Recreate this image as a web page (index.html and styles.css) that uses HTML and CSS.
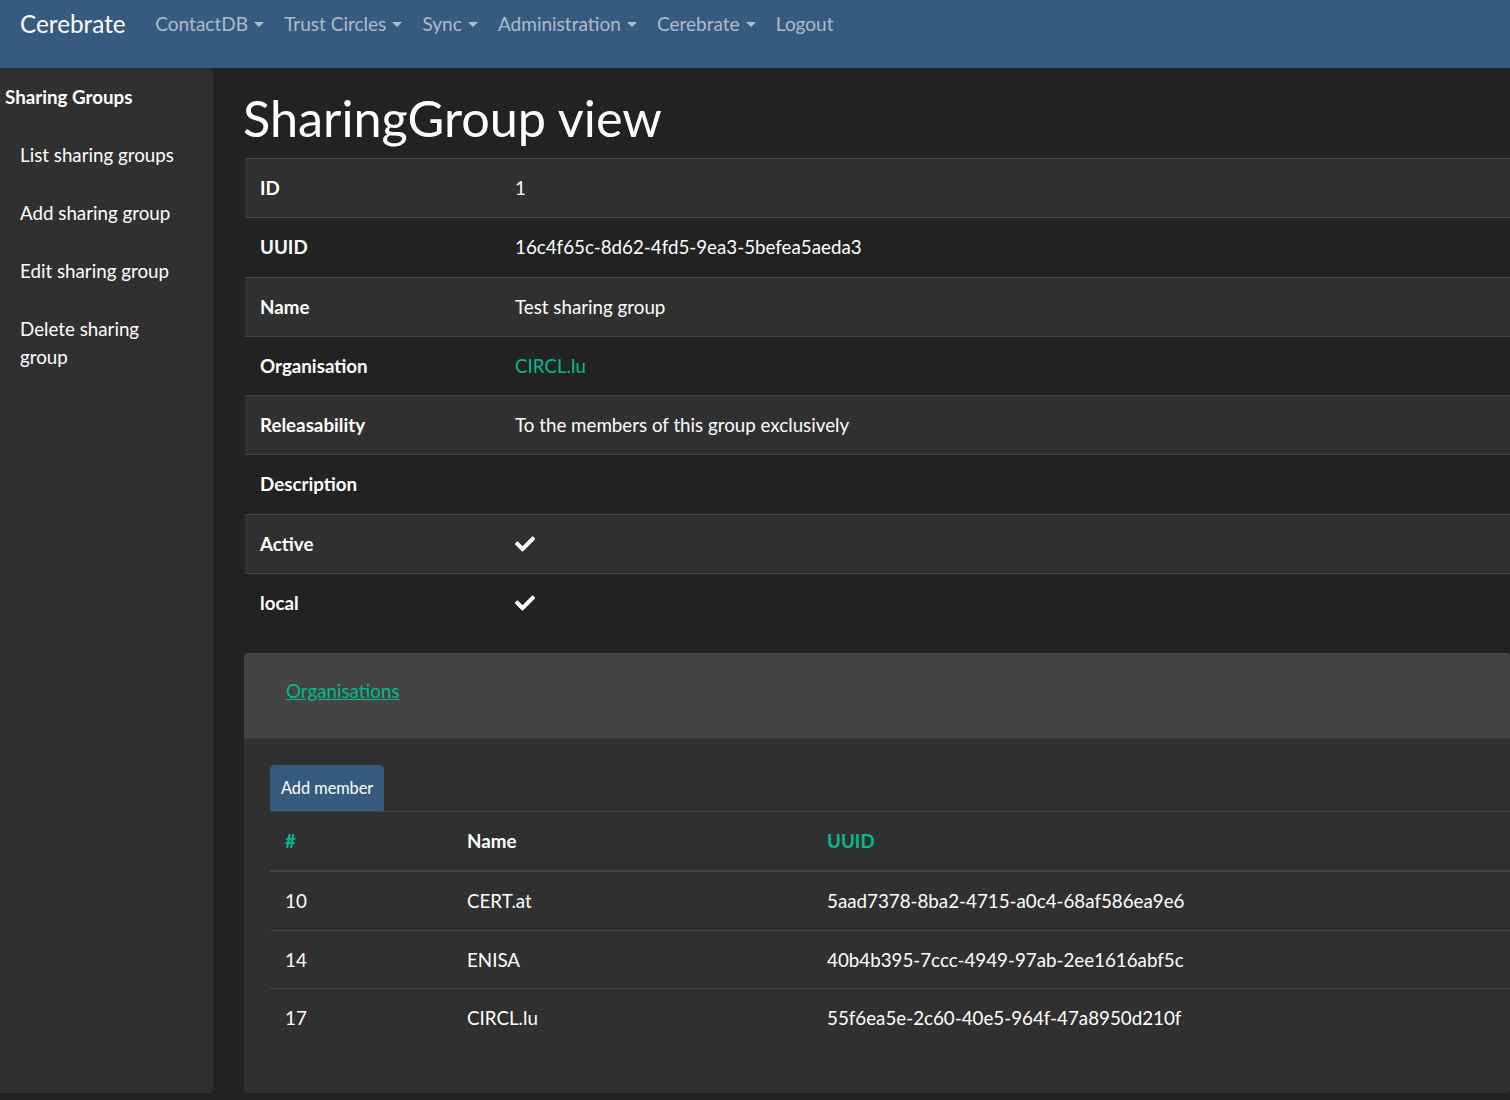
FILE: index.html
```html
<!DOCTYPE html>
<html>
<head>
<meta charset="utf-8">
<link rel="stylesheet" href="styles.css">
</head>
<body>
<nav class="navbar">
  <span class="brand">Cerebrate</span>
  <ul class="nav">
    <li class="nav-link dd">ContactDB</li>
    <li class="nav-link dd">Trust Circles</li>
    <li class="nav-link dd">Sync</li>
    <li class="nav-link dd">Administration</li>
    <li class="nav-link dd">Cerebrate</li>
    <li class="nav-link">Logout</li>
  </ul>
</nav>
<div class="layout">
  <aside class="sidebar">
    <div class="side-head">Sharing Groups</div>
    <a class="side-item">List sharing groups</a>
    <a class="side-item">Add sharing group</a>
    <a class="side-item">Edit sharing group</a>
    <a class="side-item">Delete sharing group</a>
  </aside>
  <main class="main">
    <h1 class="title">SharingGroup view</h1>
    <div class="details">
      <div class="drow striped"><div class="dlabel">ID</div><div class="dval">1</div></div>
      <div class="drow"><div class="dlabel">UUID</div><div class="dval">16c4f65c-8d62-4fd5-9ea3-5befea5aeda3</div></div>
      <div class="drow striped"><div class="dlabel">Name</div><div class="dval">Test sharing group</div></div>
      <div class="drow"><div class="dlabel">Organisation</div><div class="dval"><a class="link">CIRCL.lu</a></div></div>
      <div class="drow striped"><div class="dlabel">Releasability</div><div class="dval">To the members of this group exclusively</div></div>
      <div class="drow"><div class="dlabel">Description</div><div class="dval"></div></div>
      <div class="drow striped"><div class="dlabel">Active</div><div class="dval"><svg class="check" viewBox="0 0 512 512"><path d="M173.898 439.404l-166.4-166.4c-9.997-9.997-9.997-26.206 0-36.204l36.203-36.204c9.997-9.998 26.207-9.998 36.204 0L192 312.69 432.095 72.596c9.997-9.997 26.207-9.997 36.204 0l36.203 36.204c9.997 9.997 9.997 26.206 0 36.204l-294.4 294.401c-9.998 9.997-26.207 9.997-36.204-.001z"/></svg></div></div>
      <div class="drow"><div class="dlabel">local</div><div class="dval"><svg class="check" viewBox="0 0 512 512"><path d="M173.898 439.404l-166.4-166.4c-9.997-9.997-9.997-26.206 0-36.204l36.203-36.204c9.997-9.998 26.207-9.998 36.204 0L192 312.69 432.095 72.596c9.997-9.997 26.207-9.997 36.204 0l36.203 36.204c9.997 9.997 9.997 26.206 0 36.204l-294.4 294.401c-9.998 9.997-26.207 9.997-36.204-.001z"/></svg></div></div>
    </div>
    <section class="card">
      <div class="card-header"><a class="link underline">Organisations</a></div>
      <div class="card-body">
        <div class="tabs"><span class="tab-btn">Add member</span></div>
        <div class="mtable">
          <div class="mrow mhead">
            <div class="c1 link bold">#</div>
            <div class="c2 bold">Name</div>
            <div class="c3 link bold">UUID</div>
          </div>
          <div class="mrow"><div class="c1">10</div><div class="c2">CERT.at</div><div class="c3">5aad7378-8ba2-4715-a0c4-68af586ea9e6</div></div>
          <div class="mrow"><div class="c1">14</div><div class="c2">ENISA</div><div class="c3">40b4b395-7ccc-4949-97ab-2ee1616abf5c</div></div>
          <div class="mrow"><div class="c1">17</div><div class="c2">CIRCL.lu</div><div class="c3">55f6ea5e-2c60-40e5-964f-47a8950d210f</div></div>
        </div>
      </div>
    </section>
  </main>
</div>
</body>
</html>
```
FILE: styles.css
```css
html, body {
  margin: 0;
  padding: 0;
}
body {
  background: #222222;
  color: #ffffff;
  font-family: Lato, "Open Sans", sans-serif;
  font-size: 18.75px;
  line-height: 28.125px;
  overflow: hidden;
}
.navbar {
  height: 68px;
  background: #375a7f;
  display: flex;
  align-items: flex-start;
  box-sizing: border-box;
  padding: 0 0 0 20px;
}
.brand {
  font-size: 24.3px;
  line-height: 30px;
  padding-top: 9px;
  margin-right: 19.6px;
  color: #fff;
}
.nav {
  list-style: none;
  margin: 0;
  padding: 0;
  display: flex;
}
.nav-link {
  color: rgba(255, 255, 255, 0.6);
  padding: 10px 10.1px;
  font-size: 19px;
  line-height: 28px;
}
.dd::after {
  content: "";
  display: inline-block;
  margin-left: 6px;
  vertical-align: 4px;
  border-top: 5px solid;
  border-left: 5px solid transparent;
  border-right: 5px solid transparent;
}
.layout {
  display: flex;
  align-items: stretch;
  height: 1025px;
}
.sidebar {
  width: 213px;
  flex: none;
  background: #303030;
  border-top-right-radius: 6px;
  border-bottom-right-radius: 4px;
  padding-top: 15px;
  box-sizing: border-box;
}
.side-head {
  font-weight: 700;
  padding: 0 0 0 5px;
  line-height: 28px;
  margin-bottom: 15px;
}
.side-item {
  display: block;
  color: #fff;
  padding: 15px 32px 15px 20px;
  line-height: 28px;
}
.main {
  flex: 1;
  padding-left: 31px;
  min-width: 0;
}
.title {
  font-size: 50.4px;
  font-weight: 400;
  line-height: 60px;
  margin: 19.6px 0 10.4px -1px;
}
.details {
  margin-left: 1px;
}
.drow {
  display: flex;
  border-top: 1px solid #444;
}
.drow.striped {
  background: #303030;
}
.dlabel {
  width: 255px;
  flex: none;
  box-sizing: border-box;
  padding: 15.1px 15px 15.05px 15px;
  font-weight: 700;
}
.dval {
  padding: 15.1px 15px 15.05px 15px;
  min-height: 28.125px;
}
.check {
  width: 20px;
  height: 20px;
  fill: #fff;
  vertical-align: -3px;
}
.link {
  color: #00bc8c;
}
.underline {
  text-decoration: underline;
}
.bold {
  font-weight: 700;
}
.card {
  margin-top: 21px;
  background: #303030;
  border-radius: 4px;
  overflow: hidden;
  height: 440px;
}
.card-header {
  background: #444444;
  height: 86px;
  box-sizing: border-box;
  padding: 24px 42px;
  border-bottom: 1px solid #3a3a3a;
}
.card-body {
  padding: 26px 0 0 26px;
}
.tabs {
  display: flex;
  border-bottom: 1px solid #444;
}
.tab-btn {
  background: #375a7f;
  color: #fff;
  font-size: 16.3px;
  line-height: 26px;
  padding: 10px 11px 10px 11px;
  border-radius: 5px 5px 2px 2px;
}
.mrow {
  display: flex;
  border-top: 1px solid #444;
}
.mrow.mhead {
  border-top: none;
  border-bottom: 2px solid #444;
}
.mrow.mhead + .mrow {
  border-top: none;
}
.c1, .c2, .c3 {
  padding: 15px 15px 14.6px 15px;
  box-sizing: border-box;
}
.c1 { width: 182px; flex: none; }
.c2 { width: 360px; flex: none; }
.c3 { flex: 1; }
```
